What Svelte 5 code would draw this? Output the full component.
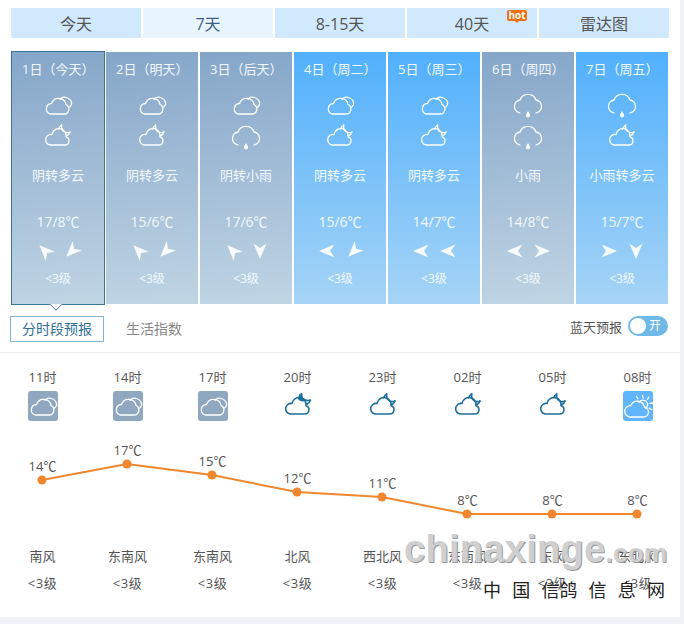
<script lang="ts">
  const tabs = [
    { label: '今天' },
    { label: '7天', active: true },
    { label: '8-15天' },
    { label: '40天', hot: true },
    { label: '雷达图' }
  ]

  // wind arrows: rotation of a left-pointing arrow
  const UL = 45, DL = -45, L = 0, R = 180, D = -90

  const days = [
    { date: '1日（今天）', icons: ['cloudy', 'night'], text: '阴转多云', temp: '17/8℃', wind: [UL, DL], gray: true, current: true },
    { date: '2日（明天）', icons: ['cloudy', 'night'], text: '阴转多云', temp: '15/6℃', wind: [UL, DL], gray: true },
    { date: '3日（后天）', icons: ['cloudy', 'rain'], text: '阴转小雨', temp: '17/6℃', wind: [UL, D], gray: true },
    { date: '4日（周二）', icons: ['cloudy', 'night'], text: '阴转多云', temp: '15/6℃', wind: [L, DL] },
    { date: '5日（周三）', icons: ['cloudy', 'night'], text: '阴转多云', temp: '14/7℃', wind: [L, L] },
    { date: '6日（周四）', icons: ['rain', 'rain'], text: '小雨', temp: '14/8℃', wind: [L, R], gray: true },
    { date: '7日（周五）', icons: ['rain', 'night'], text: '小雨转多云', temp: '15/7℃', wind: [R, D] }
  ]

  const hours = [
    { time: '11时', icon: 'cloudy', box: 'gray', temp: 14, y: 55, wind: '南风' },
    { time: '14时', icon: 'cloudy', box: 'gray', temp: 17, y: 39, wind: '东南风' },
    { time: '17时', icon: 'cloudy', box: 'gray', temp: 15, y: 50, wind: '东南风' },
    { time: '20时', icon: 'moon', box: '', temp: 12, y: 67, wind: '北风' },
    { time: '23时', icon: 'night', box: '', temp: 11, y: 72, wind: '西北风' },
    { time: '02时', icon: 'night', box: '', temp: 8, y: 89, wind: '东南风' },
    { time: '05时', icon: 'night', box: '', temp: 8, y: 89, wind: '东风' },
    { time: '08时', icon: 'sun', box: 'blue', temp: 8, y: 89, wind: '东北风' }
  ]

  const points = hours.map((h, i) => `${42 + i * 85},${h.y}`).join(' ')
</script>

{#snippet icon(name)}
  <svg class="wx" viewBox="0 0 30 26" fill="none" stroke="currentColor" stroke-width="1.3" stroke-linecap="round" stroke-linejoin="round">
    {#if name === 'cloudy'}
      <path d="M7 22h14a5 5 0 0 0 2-9.500A7.500 7.500 0 0 0 8.500 11.500 5.400 5.400 0 0 0 7 22z" />
      <path d="M17 7.500C18 5.500 21 4.500 23.500 5.500c1.500.5 4.500 2.500 5 5 .4 2-.8 4-3 5" />
    {:else if name === 'night' || name === 'moon'}
      <path d="M7 21h14.500a4.200 4.200 0 0 0 1.500-8.200A7 7 0 0 0 9 10.500 5.300 5.300 0 0 0 7 21z" />
      {#if name === 'moon'}
        <path d="M17 4.500c-.5-1.500 0-3 1.500-3.500-.3 2.500 1 5 3.500 6 1.800.7 3.800.6 5.500 0-.5 2-1.800 3.300-3.500 4" />
        <path d="M15.500 5.500c.5-2 1.500-3.500 3-4.500-.3 2.500 1 5 3.500 6-2.500 1-5 .5-6.500-1.500z" fill="currentColor" />
      {:else}
        <path d="M18.700 1c-.5 3 1 6 3 7 1.500.8 3.500.8 5.300 0" />
        <path d="M18.700 1c-1.500 1-2.500 2.500-3.200 4" />
        <path d="M27 8c-.6 1.800-1.800 3-3.300 3.800" />
      {/if}
    {:else if name === 'rain'}
      <path d="M7 21C3.500 20 1.500 17.500 1.500 14.500A6.500 6.500 0 0 1 7 8 8.500 8.500 0 0 1 23 8 6.500 6.500 0 0 1 28.500 14.500c0 3-2 5.500-5.500 6.500" />
      <path d="M15 19l1.800 3.500a2 2 0 1 1-3.600 0z" fill="currentColor" stroke="none" />
    {:else}
      <path d="M7 24h13.500a5 5 0 0 0 1-9.900A7.200 7.200 0 0 0 7.800 12.600 5.700 5.700 0 0 0 7 24z" />
      <path d="M16 9.500a4.600 4.600 0 0 1 8.400 3.500c-.3 1-.9 1.800-1.800 2.300" />
      <path d="M19.500 2.500l.6 2.600M26 4l-1.600 2.300M29.500 10l-2.700.4M28.500 16.500l-2.300-1.400M13.500 3.500l1.400 2.300" />
    {/if}
  </svg>
{/snippet}

<div class="page">
  <div class="panel">
    <nav class="tabs">
      {#each tabs as tab}
        <div class="tab" class:active={tab.active}>
          {tab.label}
          {#if tab.hot}<span class="hot">hot</span>{/if}
        </div>
      {/each}
    </nav>

    <div class="days">
      {#each days as day}
        <div class="day" class:gray={day.gray} class:current={day.current}>
          <div class="date">{day.date}</div>
          <div class="day-icons">
            {#each day.icons as name}
              <div class="day-icon">{@render icon(name)}</div>
            {/each}
          </div>
          <div class="desc">{day.text}</div>
          <div class="temp">{day.temp}</div>
          <div class="arrows">
            {#each day.wind as deg}
              <svg class="arrow" viewBox="0 0 16 14" style="transform: rotate({deg}deg)">
                <path d="M0 7 15.500 .5 11 7 15.500 13.500z" fill="#fff" />
              </svg>
            {/each}
          </div>
          <div class="level">&lt;3级</div>
        </div>
      {/each}
    </div>

    <div class="subbar">
      <div class="subtab on">分时段预报</div>
      <div class="subtab">生活指数</div>
      <div class="sky">
        蓝天预报
        <span class="toggle"><i></i>开</span>
      </div>
    </div>

    <div class="hourly">
      <div class="row times">
        {#each hours as h}<div>{h.time}</div>{/each}
      </div>
      <div class="row hour-icons">
        {#each hours as h}
          <div><span class="hbox {h.box}">{@render icon(h.icon)}</span></div>
        {/each}
      </div>
      <div class="chart">
        <svg viewBox="0 0 680 118" width="680" height="118">
          <polyline points={points} fill="none" stroke="#f0862d" stroke-width="2" />
          {#each hours as h, i}
            <circle cx={42 + i * 85} cy={h.y} r="4.500" fill="#f0862d" />
          {/each}
        </svg>
        {#each hours as h, i}
          <span class="clabel" style="left: {i * 85}px; top: {h.y - 23}px">{h.temp}℃</span>
        {/each}
      </div>
      <div class="row winds">
        {#each hours as h}<div>{h.wind}</div>{/each}
      </div>
      <div class="row levels">
        {#each hours as h}<div>&lt;3级</div>{/each}
      </div>
    </div>
  </div>

  <div class="mark">
    <div class="mark-en">chinaxinge<span>.com</span></div>
    <div class="mark-cn"><span>中</span><span>国</span><span>信鸽</span><span>信</span><span>息</span><span>网</span></div>
  </div>
</div>

<style>
  :global(body) { margin: 0; }
  .page {
    position: relative;
    width: 684px;
    height: 624px;
    overflow: hidden;
    background: #eff3f7;
    font-family: "Open Sans", "Noto Sans CJK SC", sans-serif;
  }
  .panel { width: 680px; height: 617px; background: #fff; padding-top: 8px; box-sizing: border-box; }

  .tabs { display: flex; gap: 2px; margin-left: 11px; width: 658px; }
  .tab {
    position: relative;
    flex: 1;
    height: 30px;
    box-sizing: border-box;
    padding-top: 2px;
    line-height: 29px;
    text-align: center;
    font-size: 16px;
    color: #555;
    background: #d0e9fc;
  }
  .tab.active { background: #e9f5fe; color: #3f5f88; }
  .hot {
    position: absolute;
    top: 2px;
    right: 10px;
    width: 20px;
    height: 11px;
    line-height: 10px;
    font-size: 10px;
    font-weight: 700;
    color: #fff;
    background: #ee6f14;
    border-radius: 2px;
  }
  .hot::after {
    content: "";
    position: absolute;
    left: 7px;
    top: 10px;
    border: 3px solid transparent;
    border-top-color: #ee6f14;
    border-bottom: 0;
  }

  .days { display: flex; gap: 2px; margin: 14px 0 0 12px; width: 656px; }
  .day {
    position: relative;
    width: 92px;
    height: 252px;
    box-sizing: border-box;
    padding-top: 8px;
    color: #fff;
    background: linear-gradient(180deg, #51b0fc, #a6d4f6);
  }
  .day.gray { background: linear-gradient(175deg, #85a6c9, #c0d5e4); }
  .day.current { outline: 1px solid #3a7396; }
  .day.current::after {
    content: "";
    position: absolute;
    left: 39px;
    top: 247px;
    width: 10px;
    height: 10px;
    box-sizing: border-box;
    background: #fff;
    border: solid #3a7396;
    border-width: 0 1px 1px 0;
    transform: rotate(45deg);
    clip-path: polygon(100% 0, 100% 100%, 0 100%);
  }
  .date { padding-left: 10px; font-size: 13px; line-height: 18px; color: #f2f8fd; }
  .day-icons { display: flex; flex-direction: column; align-items: center; gap: 6px; margin-top: 14px; }
  .day-icon { height: 26px; }
  .wx { display: block; width: 30px; height: 26px; }
  .desc { margin-top: 16px; text-align: center; font-size: 13px; line-height: 18px; color: #f2f8fd; }
  .temp { margin-top: 29px; text-align: center; font-size: 14px; line-height: 18px; color: #f2f8fd; }
  .arrows { display: flex; justify-content: center; gap: 11px; margin-top: 12px; height: 16px; align-items: center; }
  .arrow { width: 16px; height: 14px; opacity: .92; }
  .level { margin-top: 12px; text-align: center; font-size: 12px; line-height: 16px; color: #f2f8fd; }

  .subbar {
    display: flex;
    align-items: flex-start;
    height: 49px;
    padding: 12px 12px 0 10px;
    box-sizing: border-box;
    border-bottom: 1px solid #eceef0;
  }
  .subtab { width: 92px; height: 26px; line-height: 26px; margin-right: 22px; font-size: 14px; color: #888; }
  .subtab.on { height: 24px; line-height: 24px; color: #2f6f96; border: 1px solid #84b4d0; text-align: center; }
  .sky { margin-left: auto; display: flex; align-items: center; gap: 6px; height: 20px; font-size: 13px; color: #555; }
  .toggle {
    position: relative;
    width: 40px;
    height: 20px;
    line-height: 20px;
    box-sizing: border-box;
    padding-left: 21px;
    border-radius: 10px;
    font-size: 12px;
    color: #fff;
    background: #6fb9e8;
  }
  .toggle i { position: absolute; left: 2px; top: 2px; width: 16px; height: 16px; border-radius: 50%; background: #fff; }

  .hourly { color: #555; }
  .row { display: grid; grid-template-columns: repeat(8, 85px); text-align: center; }
  .times { margin-top: 15px; font-size: 13px; line-height: 18px; }
  .hour-icons { margin-top: 5px; height: 30px; }
  .hour-icons > div { display: flex; justify-content: center; }
  .hbox { display: flex; align-items: center; justify-content: center; width: 30px; height: 30px; border-radius: 3px; color: #1f6f9e; }
  .hbox.gray { background: #8fa8c0; color: #fff; }
  .hbox.blue { background: #61b6fb; color: #fff; }
  .hbox:not(.gray):not(.blue) .wx { stroke-width: 1.6; }
  .chart { position: relative; height: 118px; margin-top: 4px; }
  .chart svg { display: block; }
  .clabel { position: absolute; width: 85px; text-align: center; font-size: 13px; line-height: 18px; color: #555; }
  .winds { font-size: 13px; line-height: 18px; margin-top: 4px; }
  .levels { font-size: 13px; line-height: 18px; margin-top: 9px; letter-spacing: .5px; }

  /* site watermark stamped over the shot */
  .mark { position: absolute; left: 404px; top: 524px; width: 264px; }
  .mark-en {
    font-family: "Liberation Sans", sans-serif;
    font-size: 38px;
    line-height: 50px;
    font-weight: 700;
    letter-spacing: .3px;
    white-space: nowrap;
    color: #cfcfcf;
    text-shadow: 1px 1px 0 #999;
  }
  .mark-en span { font-size: 26px; }
  .mark-cn {
    display: flex;
    justify-content: space-between;
    width: 182px;
    margin-left: 79px;
    font-family: "Noto Sans CJK SC", sans-serif;
    font-size: 18px;
    line-height: 22px;
    white-space: nowrap;
    color: #222;
    text-shadow: 1px 1px 0 #fff;
  }
</style>
